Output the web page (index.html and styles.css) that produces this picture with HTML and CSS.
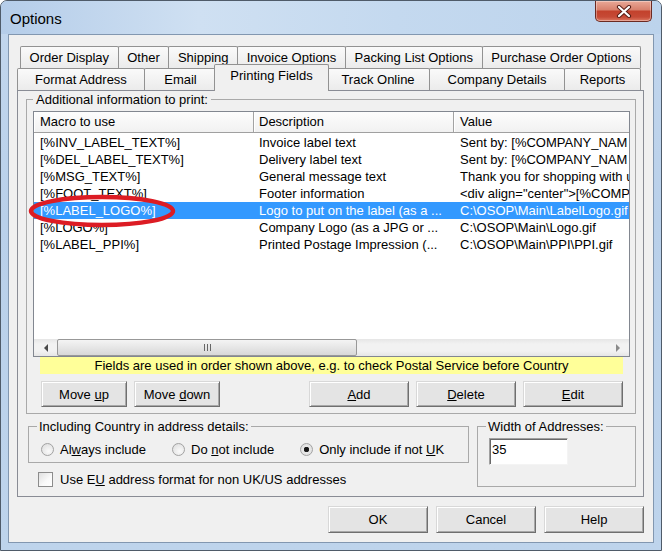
FILE: index.html
```html
<!DOCTYPE html>
<html lang="en">
<head>
    <meta charset="UTF-8">
    <title>Options</title>
    <link rel="stylesheet" href="styles.css">
</head>
<body>

<div class="window">
    <div class="titlebar">
        <span class="title">Options</span>
        <div class="close-btn">
            <svg width="16" height="13" viewBox="0 0 16 13">
                <path d="M3 2 L13 11 M13 2 L3 11" stroke="#5a2018" stroke-width="4.2" stroke-linecap="round"/>
                <path d="M3 2 L13 11 M13 2 L3 11" stroke="#fff" stroke-width="2.2" stroke-linecap="round"/>
            </svg>
        </div>
    </div>

    <div class="client">
        <!-- Tabs -->
        <div class="tab-row back">
            <div class="tab">Order Display</div>
            <div class="tab">Other</div>
            <div class="tab">Shipping</div>
            <div class="tab">Invoice Options</div>
            <div class="tab">Packing List Options</div>
            <div class="tab">Purchase Order Options</div>
        </div>
        <div class="tab-row front">
            <div class="tab">Format Address</div>
            <div class="tab">Email</div>
            <div class="tab selected">Printing Fields</div>
            <div class="tab">Track Online</div>
            <div class="tab">Company Details</div>
            <div class="tab">Reports</div>
        </div>

        <div class="panel">
            <fieldset class="group main-group">
                <legend>Additional information to print:</legend>

                <div class="listview">
                    <div class="lv-head">
                        <div class="cell c1">Macro to use</div>
                        <div class="cell c2">Description</div>
                        <div class="cell c3">Value</div>
                    </div>
                    <div class="lv-body">
                        <div class="row"><div class="cell c1">[%INV_LABEL_TEXT%]</div><div class="cell c2">Invoice label text</div><div class="cell c3">Sent by: [%COMPANY_NAM</div></div>
                        <div class="row"><div class="cell c1">[%DEL_LABEL_TEXT%]</div><div class="cell c2">Delivery label text</div><div class="cell c3">Sent by: [%COMPANY_NAM</div></div>
                        <div class="row"><div class="cell c1">[%MSG_TEXT%]</div><div class="cell c2">General message text</div><div class="cell c3">Thank you for shopping with u</div></div>
                        <div class="row"><div class="cell c1">[%FOOT_TEXT%]</div><div class="cell c2">Footer information</div><div class="cell c3">&lt;div align="center"&gt;[%COMP</div></div>
                        <div class="row sel"><div class="cell c1">[%LABEL_LOGO%]</div><div class="cell c2">Logo to put on the label (as a ...</div><div class="cell c3">C:\OSOP\Main\LabelLogo.gif</div></div>
                        <div class="row"><div class="cell c1">[%LOGO%]</div><div class="cell c2">Company Logo (as a JPG or ...</div><div class="cell c3">C:\OSOP\Main\Logo.gif</div></div>
                        <div class="row"><div class="cell c1">[%LABEL_PPI%]</div><div class="cell c2">Printed Postage Impression (...</div><div class="cell c3">C:\OSOP\Main\PPI\PPI.gif</div></div>
                    </div>
                    <div class="hscroll">
                        <div class="arrow-area"><span class="tri-left"></span></div>
                        <div class="thumb"><span class="grip"></span></div>
                        <div class="track"></div>
                        <div class="arrow-area"><span class="tri-right"></span></div>
                    </div>
                </div>

                <div class="hint">Fields are used in order shown above, e.g. to check Postal Service before Country</div>

                <div class="btn-row">
                    <div class="btn-group">
                        <button class="btn small">Move <u>u</u>p</button>
                        <button class="btn small">Move <u>d</u>own</button>
                    </div>
                    <div class="btn-group">
                        <button class="btn"><u>A</u>dd</button>
                        <button class="btn"><u>D</u>elete</button>
                        <button class="btn"><u>E</u>dit</button>
                    </div>
                </div>
            </fieldset>

            <div class="lower">
                <div class="lower-left">
                    <fieldset class="group country-group">
                        <legend>Including Country in address details:</legend>
                        <div class="radio-row">
                            <label class="radio"><span class="circle"></span><span>Al<u>w</u>ays include</span></label>
                            <label class="radio"><span class="circle"></span><span>Do <u>n</u>ot include</span></label>
                            <label class="radio"><span class="circle on"></span><span>Only include if not <u>U</u>K</span></label>
                        </div>
                    </fieldset>
                    <label class="check-row"><span class="checkbox"></span><span>Use E<u>U</u> address format for non UK/US addresses</span></label>
                </div>
                <fieldset class="group width-group">
                    <legend>Width of Addresses:</legend>
                    <div class="textbox">35</div>
                </fieldset>
            </div>
        </div>

        <div class="dialog-buttons">
            <button class="btn dlg">OK</button>
            <button class="btn dlg">Cancel</button>
            <button class="btn dlg">Help</button>
        </div>
    </div>

    <!-- red marker drawn over the list -->
    <svg class="marker" width="152" height="38" viewBox="0 0 152 38">
        <ellipse cx="75" cy="19" rx="71" ry="14" fill="none" stroke="#dc1c24" stroke-width="4.5"/>
    </svg>
</div>

</body>
</html>
```

FILE: styles.css
```css
body {
    margin: 0;
    background-color: #fff;
    font-family: "Liberation Sans", Arial, sans-serif;
    font-size: 13px;
    color: #000;
}
.window {
    position: relative;
    width: 662px;
    height: 551px;
    box-sizing: border-box;
    border: 1px solid #4f5b69;
    border-radius: 7px 7px 0 0;
    background: linear-gradient(to bottom, #c3d7ee 0%, #b9d0ea 40%, #bed4ec 100%);
    display: flex;
    flex-direction: column;
    overflow: hidden;
}
.titlebar {
    height: 33px;
    display: flex;
    align-items: center;
    padding-left: 9px;
    background: linear-gradient(to right, #b5cde9 0%, #cfe0f2 30%, #c4d9ef 60%, #bcd3ec 100%);
}
.title {
    font-size: 15px;
    margin-top: 2px;
}
.close-btn {
    margin-left: auto;
    margin-right: 9px;
    align-self: flex-start;
    width: 57px;
    height: 21px;
    box-sizing: border-box;
    border: 1px solid #6b2a22;
    border-top: none;
    border-radius: 0 0 5px 5px;
    background: linear-gradient(to bottom, #e9a897 0%, #d7806c 45%, #c3412c 50%, #c64a36 80%, #dc7a63 100%);
    display: flex;
    align-items: center;
    justify-content: center;
    box-shadow: inset 0 0 0 1px rgba(255,255,255,0.35);
}
.client {
    margin: 0 7px;
    height: 509px;
    box-sizing: border-box;
    border: 1px solid #8297b0;
    background-color: #f0f0f0;
    padding: 11px 9px 0 8px;
    display: flex;
    flex-direction: column;
}

/* tabs */
.tab-row {
    display: flex;
    height: 22px;
}
.tab-row.back {
    margin: 0 3px;
}
.tab-row.front {
    margin-right: 3px;
}
.tab {
    flex: 1 1 auto;
    padding: 0 5px;
    height: 22px;
    box-sizing: border-box;
    border: 1px solid #929292;
    border-bottom: none;
    border-radius: 2px 2px 0 0;
    margin-left: -1px;
    background: linear-gradient(to bottom, #fafafa, #ebebeb);
    text-align: center;
    line-height: 21px;
    white-space: nowrap;
}
.tab:first-child {
    margin-left: 0;
}
.front .tab {
    flex: none;
    padding: 0;
}
.front .tab:nth-child(1) { width: 128px; }
.front .tab:nth-child(2) { width: 73px; }
.front .tab:nth-child(3) { width: 115px; }
.front .tab:nth-child(4) { width: 104px; }
.front .tab:nth-child(5) { width: 136px; }
.front .tab:nth-child(6) { width: 77px; }
.tab.selected {
    position: relative;
    z-index: 2;
    height: 27px;
    margin-top: -4px;
    margin-left: -3px;
    margin-right: -2px;
    background: #f0f0f0;
    line-height: 22px;
}
.panel {
    height: 407px;
    box-sizing: border-box;
    border: 1px solid #898c95;
    background-color: #f0f0f0;
    padding-top: 1px;
}

/* group boxes */
.group {
    border: 1px solid #a9a9a9;
    margin: 0;
    min-width: 0;
}
.group legend {
    padding: 0 2px;
    line-height: 15px;
}
.main-group {
    margin: 0 7px 0 8px;
    padding: 0 5px 6px 6px;
}
.main-group legend {
    padding: 0 3px;
}

/* list view */
.listview {
    margin-top: 4px;
    height: 246px;
    box-sizing: border-box;
    border: 1px solid #828790;
    background-color: #fff;
    display: flex;
    flex-direction: column;
    overflow: hidden;
}
.lv-head {
    display: flex;
    height: 21px;
    box-sizing: border-box;
    border-bottom: 1px solid #a0a0a0;
    background: linear-gradient(to bottom, #fdfdfd, #f1f1f1);
    flex: none;
}
.cell {
    flex: none;
    box-sizing: border-box;
    white-space: nowrap;
    overflow: hidden;
}
.c1 {
    width: 220px;
    padding-left: 6px;
}
.c2 {
    width: 200px;
    padding-left: 5px;
}
.c3 {
    width: 300px;
    padding-left: 6px;
}
.lv-head .cell {
    line-height: 20px;
    border-right: 1px solid #a3a3a3;
    box-shadow: inset 1px 0 0 #fff;
}
.lv-body {
    flex: 1;
    padding-top: 1px;
}
.row {
    display: flex;
    height: 17px;
    line-height: 17px;
}
.row.sel {
    background-color: #3399ff;
    color: #fff;
}
.hscroll {
    flex: none;
    height: 17px;
    display: flex;
    background: linear-gradient(to bottom, #e6e6e6, #f2f2f2 30%, #f2f2f2 70%, #e6e6e6);
}
.arrow-area {
    width: 23px;
    display: flex;
    align-items: center;
    justify-content: center;
}
.tri-left {
    border-right: 4px solid #4a4a4a;
    border-top: 4px solid transparent;
    border-bottom: 4px solid transparent;
}
.tri-right {
    border-left: 4px solid #8a8a8a;
    border-top: 4px solid transparent;
    border-bottom: 4px solid transparent;
}
.thumb {
    width: 300px;
    box-sizing: border-box;
    border: 1px solid #989898;
    border-radius: 2px;
    background: linear-gradient(to bottom, #f4f4f4, #e6e6e6 50%, #d8d8d8);
    display: flex;
    align-items: center;
    justify-content: center;
}
.grip {
    width: 7px;
    height: 7px;
    background: repeating-linear-gradient(to right, #666 0, #666 1px, transparent 1px, transparent 3px);
}
.track {
    flex: 1;
}
.hint {
    margin: 0 7px;
    height: 17px;
    line-height: 17px;
    background-color: #ffff99;
    text-align: center;
    white-space: nowrap;
}
.btn-row {
    display: flex;
    justify-content: space-between;
    margin: 7px 7px 0 8px;
}
.btn-group {
    display: flex;
    gap: 7px;
}
.btn {
    font-family: "Liberation Sans", Arial, sans-serif;
    font-size: 13px;
    color: #000;
    width: 100px;
    height: 26px;
    padding: 0;
    border: 1px solid;
    border-color: #d8d8d8 #6f6f6f #6f6f6f #d8d8d8;
    background-color: #e4e4e4;
    box-shadow: inset 1px 1px 0 #fff, inset -1px -1px 0 #a8a8a8;
}
.btn.small {
    width: 86px;
}

/* lower section */
.lower {
    display: flex;
    gap: 8px;
    margin: 5px 7px 0 10px;
}
.lower-left {
    width: 441px;
    flex: none;
}
.country-group {
    padding: 0 8px 5px 8px;
}
.radio-row {
    display: flex;
    gap: 26px;
    margin-top: 7px;
    padding-left: 4px;
    height: 16px;
    align-items: center;
}
.radio {
    display: flex;
    align-items: center;
    gap: 6px;
    white-space: nowrap;
}
.circle {
    width: 13px;
    height: 13px;
    box-sizing: border-box;
    border-radius: 50%;
    border: 1px solid #a2a2a2;
    background: radial-gradient(circle at 60% 65%, #fafafa 0, #e4e4e4 70%, #d2d2d2 100%);
}
.circle.on {
    background: radial-gradient(circle, #111 0, #222 2.5px, #e8e8e8 3px, #dcdcdc 100%);
}
.check-row {
    display: flex;
    align-items: center;
    gap: 7px;
    margin: 9px 0 0 10px;
    height: 15px;
    white-space: nowrap;
}
.checkbox {
    width: 15px;
    height: 15px;
    box-sizing: border-box;
    border: 1px solid #8c8c8c;
    background: linear-gradient(135deg, #e0e0e0, #fafafa 60%, #fff);
}
.width-group {
    flex: 1;
    padding: 0 8px 6px 8px;
}
.textbox {
    margin: 4px 0 0 3px;
    width: 79px;
    height: 27px;
    box-sizing: border-box;
    border: 1px solid;
    border-color: #a0a0a0 #f4f4f4 #f4f4f4 #a0a0a0;
    box-shadow: inset 1px 1px 0 #696969;
    background-color: #fff;
    padding: 2px 0 0 2px;
    line-height: 18px;
}

/* bottom buttons */
.dialog-buttons {
    display: flex;
    justify-content: flex-end;
    gap: 8px;
    margin-top: 9px;
}
.btn.dlg {
    height: 27px;
}

.marker {
    position: absolute;
    left: 26px;
    top: 191px;
}
```
